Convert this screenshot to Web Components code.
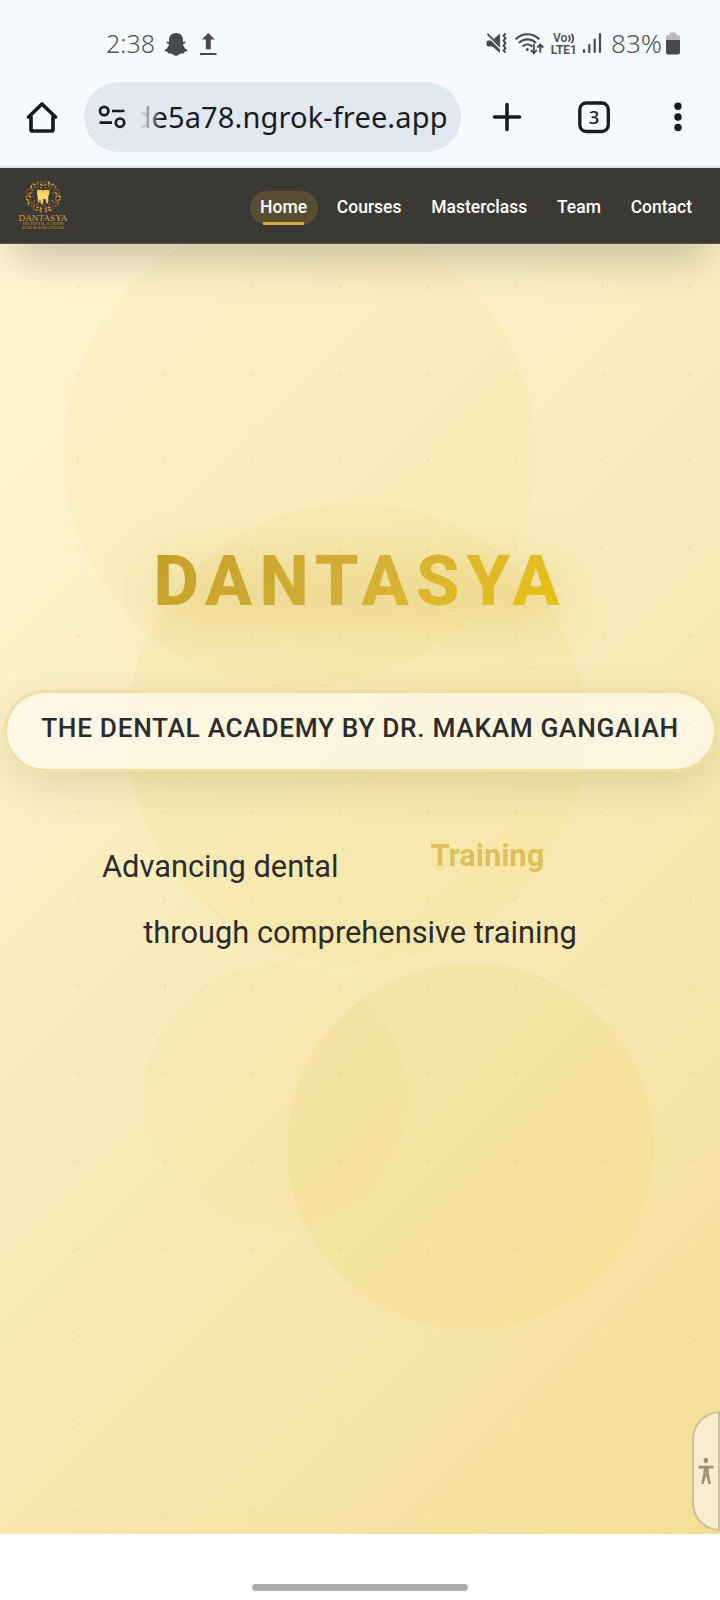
<!DOCTYPE html>
<html lang="en">
<head>
<meta charset="utf-8">
<title>Dantasya</title>
<style>
html,body{margin:0;padding:0;background:#fff}
body{font-family:Roboto,"Liberation Sans",sans-serif;width:720px;height:1600px;overflow:hidden}
</style>
</head>
<body>
<phone-screen>
  <status-bar></status-bar>
  <browser-bar></browser-bar>
  <site-nav>
    <nav-link active>Home</nav-link>
    <nav-link>Courses</nav-link>
    <nav-link>Masterclass</nav-link>
    <nav-link>Team</nav-link>
    <nav-link>Contact</nav-link>
  </site-nav>
  <hero-section>
    <hero-title>DANTASYA</hero-title>
    <hero-badge>THE DENTAL ACADEMY BY DR. MAKAM GANGAIAH</hero-badge>
    <hero-tagline>
      <span slot="lead">Advancing dental</span>
      <span slot="word">Training</span>
      <span slot="rest">through comprehensive training</span>
    </hero-tagline>
  </hero-section>
  <gesture-bar></gesture-bar>
</phone-screen>
<script>
const define=(name,html)=>customElements.define(name,class extends HTMLElement{
  constructor(){
    super();
    const t=document.createElement('template');
    t.innerHTML=html;
    this.attachShadow({mode:'open'}).append(t.content.cloneNode(true));
  }
});

define('phone-screen',`<style>
:host{display:flex;flex-direction:column;width:720px;height:1600px;background:#fff;overflow:hidden}
</style><slot></slot>`);

define('status-bar',`<style>
:host{display:flex;justify-content:space-between;height:82px;background:#f5faff;flex:none}
svg{display:block;flex:none}
text{font-family:"Noto Sans","Open Sans",sans-serif;fill:#535355}
</style>
<svg width="240" height="82" viewBox="0 0 240 82">
  <text x="106" y="52.500" font-size="25.500" font-weight="350" textLength="49" lengthAdjust="spacingAndGlyphs">2:38</text>
  <path fill="#49494b" d="M176 33c-4.500 0-7 3-7 7v2l-2-.5c-.8.200-.700 1.200.2 1.700l1.800 1c-.5 3-2.200 4.700-4 5.500-.8.500-.5 1.500 2.700 2.200.5 1 .3 1.500 1.300 1.500 1.500 0 2.700-.2 4 1 1 .9 2 1.400 3 1.400s2-.5 3-1.400c1.300-1.200 2.500-1 4-1 1 0 .8-.5 1.300-1.500 3.200-.7 3.500-1.700 2.700-2.200-1.800-.8-3.500-2.500-4-5.500l1.800-1c.9-.5 1-1.500.2-1.700l-2 .5v-2c0-4-2.500-7-7-7z"/>
  <path fill="#49494b" d="M208.300 33l6.500 6.500h-4v9.800h-5v-9.800h-4zM200 53h16.500v2H200z"/>
</svg>
<svg width="250" height="82" viewBox="470 0 250 82">
  <path fill="#49494b" d="M488 40.500h3l9 9V53l-7.500-6.500H489c-2 0-2.500-.8-2.500-2.500v-1.500c0-1.200.5-2 1.500-2zM500 33.500v11.800l-6.300-6.300z"/>
  <path fill="none" stroke="#49494b" stroke-width="1.900" d="M487.500 33.800l12.500 12.800M505.500 33.500l-2 2.200 2 2.500-2 2.500 2 2.500-2 2.500 2 2.500-2 2.500 2 2"/>
  <g fill="none" stroke="#49494b" stroke-width="2.100">
    <path d="M515.700 39.200c6.500-6.700 17-6.700 23.500 0M519 43c4.700-4.800 12.200-4.800 17 0M522.700 46.500c2.800-2.700 6.800-2.700 9.500 0"/>
    <path stroke-width="1.900" d="M533.800 43.800v9M530.800 50.200l3 3 3-3M540.300 52.800v-8M537.300 47.500l3-3 3 3"/>
  </g>
  <circle cx="527.300" cy="49.600" r="1.500" fill="#49494b"/>
  <text x="553" y="41.800" font-size="12" font-weight="600" textLength="14.500" lengthAdjust="spacingAndGlyphs" style="font-family:Roboto">Vo</text>
  <path fill="none" stroke="#49494b" stroke-width="1.700" d="M568.700 35.200q2.300 3.300 0 6.600M571.500 33.700q3.500 4.800 0 9.600"/>
  <text x="550.800" y="54" font-size="12.500" font-weight="700" textLength="26" lengthAdjust="spacingAndGlyphs" style="font-family:Roboto">LTE1</text>
  <path stroke="#49494b" stroke-width="2.200" stroke-linecap="round" d="M584 50v2M589.300 45v7M594.700 39.500v12.500M600 34v18"/>
  <text x="611" y="52.500" font-size="25.500" font-weight="350" textLength="51" lengthAdjust="spacingAndGlyphs">83%</text>
  <path fill="#b9babf" d="M669.500 34q0-1.500 1.500-1.500h4q1.500 0 1.500 1.500v1h1.500q2 0 2 2v4h-14v-4q0-2 2-2h1.500z"/>
  <path fill="#49494b" d="M666 40h14v12.500q0 2-2 2h-10q-2 0-2-2z"/>
</svg>`);

define('browser-bar',`<style>
:host{display:flex;align-items:flex-start;height:84px;background:#f5faff;border-bottom:2px solid #dde4ea;flex:none}
svg{display:block;flex:none}
.pill{width:377px;height:70px;border-radius:35px;background:#e2e8f1;flex:none}
text{font-family:"Noto Sans",sans-serif;fill:#181b20}
</style>
<svg width="84" height="70" viewBox="0 82 84 70"><path fill="none" stroke="#181b20" stroke-width="3.700" stroke-linejoin="round" d="M28.500 117H31v12.500q0 1.500 1.500 1.500h19q1.500 0 1.500-1.500V117h2.500L42 104z"/></svg>
<div class="pill"><svg width="377" height="70" viewBox="84 82 377 70">
  <defs><linearGradient id="fade" gradientUnits="userSpaceOnUse" x1="140" x2="162" y1="0" y2="0"><stop offset="0" stop-color="#181b20" stop-opacity="0"/><stop offset=".5" stop-color="#181b20" stop-opacity=".5"/><stop offset="1" stop-color="#181b20"/></linearGradient></defs>
  <g fill="none" stroke="#181b20" stroke-width="2.700"><circle cx="104.200" cy="111" r="4.200"/><circle cx="120" cy="122.700" r="4.200"/><path d="M112 111h12.500M99.500 122.700H112"/></g>
  <text x="133.500" y="127.500" font-size="29" font-weight="380" textLength="314" style="fill:url(#fade)">de5a78.ngrok-free.app</text>
</svg></div>
<svg width="259" height="70" viewBox="461 82 259 70">
  <g fill="none" stroke="#181b20" stroke-width="3.600" stroke-linecap="round"><path d="M507 104.500v25M494.500 117h25"/><rect x="579.800" y="103" width="28.500" height="28.500" rx="6.500" stroke-width="3.300"/></g>
  <text x="594" y="123.700" font-size="18.500" font-weight="500" text-anchor="middle">3</text>
  <g fill="#181b20"><circle cx="678" cy="106.300" r="3.700"/><circle cx="678" cy="117" r="3.700"/><circle cx="678" cy="127.500" r="3.700"/></g>
</svg>`);

// Laurel leaves: three rings of small tilted ellipses, left open at the bottom.
const tones=['#c08a2c','#7d5c2a','#d6a13c','#96702c','#6a5431'];
let leaves='';
[[16.3,26,1.9,.9],[13.3,22,1.7,.8],[10.3,14,.9,.6]].forEach(([r,n,rx,ry],k)=>{
  for(let i=0;i<n;i++){
    const a=100+i*340/(n-1),t=a*Math.PI/180;
    const x=(43.3+r*Math.cos(t)).toFixed(2),y=(195.7+r*.9*Math.sin(t)).toFixed(2);
    leaves+=`<ellipse cx="${x}" cy="${y}" rx="${rx}" ry="${ry}" fill="${tones[(i*3+k*2)%5]}" transform="rotate(${(a+(i%2?50:130)).toFixed(0)} ${x} ${y})"/>`;
  }
});

define('brand-logo',`<style>
:host{display:block;flex:none}svg{display:block}
text{font-family:"Liberation Serif",serif;fill:#d9a443;text-anchor:middle}
</style>
<svg width="52" height="52" viewBox="17 179 52 52">
  <defs><linearGradient id="g" x2="0" y2="1"><stop stop-color="#f2bd45"/><stop offset=".5" stop-color="#ffe37d"/><stop offset="1" stop-color="#e7a72f"/></linearGradient></defs>
  ${leaves}
  <path fill="url(#g)" d="M37 190q0-1.500 2-1.300l4.300.5 4.200-.5q2-.2 2 1.800 0 3-1.200 5v6q-.5 2-1.700 1-.8-1.500-1-4.500h-2.200v4.700q-1.600 1.500-2.700-.2-.4-3.500-.9-4.500l-.4 3.500q-1.400.5-1.700-.7V195.500q-1-2-.7-5.500z"/>
  <text x="43" y="220" font-size="9" textLength="49" lengthAdjust="spacingAndGlyphs">DANTASYA</text>
  <text x="43.200" y="224.400" font-size="4" font-weight="700" textLength="42" lengthAdjust="spacingAndGlyphs" style="fill:#b07f2d">THE DENTAL ACADEMY</text>
  <text x="43.200" y="228.300" font-size="3" font-weight="700" textLength="42" lengthAdjust="spacingAndGlyphs" style="fill:#b07f2d">BY DR. MAKAM GANGAIAH</text>
</svg>`);

define('site-nav',`<style>
:host{display:flex;justify-content:space-between;align-items:center;box-sizing:border-box;height:76px;padding:0 17.500px 0 17px;background:#3b3933;border-bottom:1px solid #55504a;flex:none;position:relative;z-index:2;box-shadow:0 27px 42px -13px rgba(0,0,0,.21)}
nav{display:flex;gap:8.750px;align-items:center;padding-top:4px}
</style><brand-logo></brand-logo><nav><slot></slot></nav>`);

define('nav-link',`<style>
:host{display:flex;box-sizing:border-box;height:34px;padding:0 10.500px;align-items:center;border-radius:17.500px;color:#fff;font-size:17.500px;font-weight:500;line-height:20px;position:relative}
:host([active]){background:#584e33}
:host([active])::after{content:"";position:absolute;left:13.500px;right:13.500px;bottom:0;height:3px;background:#d4af37}
span{position:relative;top:-1px}
</style><span><slot></slot></span>`);

define('hero-backdrop',`<style>
:host{position:absolute;inset:0}svg{display:block}
</style>
<svg width="720" height="1290" viewBox="0 244 720 1290">
  <defs><pattern id="dots" patternUnits="userSpaceOnUse" x="34" y="242.600" width="87.500" height="87.500"><circle cx="43.750" cy="43.750" r="1.900" fill="#d4af37" fill-opacity=".125"/></pattern>
  <linearGradient id="c" x1="0" y1="0" x2="1" y2="1"><stop stop-color="#d8b43a"/><stop offset="1" stop-color="#f4d834"/></linearGradient></defs>
  <circle cx="299.500" cy="451.500" r="236.500" fill="url(#c)" fill-opacity=".06"/>
  <circle cx="470.300" cy="1146.200" r="183.500" fill="url(#c)" fill-opacity=".1"/>
  <circle cx="275.800" cy="1096.300" r="131.700" fill="url(#c)" fill-opacity=".045"/>
  <circle cx="356.500" cy="733" r="230" fill="url(#c)" fill-opacity=".08"/>
  <rect y="244" width="720" height="1290" fill="url(#dots)"/>
</svg>`);

define('access-tab',`<style>
:host{display:flex;align-items:center;justify-content:center;box-sizing:border-box;position:absolute;right:0;bottom:3px;width:28px;height:120px;border:2px solid #cdc297;border-radius:28px 0 0 28px;background:#f7eed0}
svg{display:block;margin-right:1px}
</style>
<svg width="16" height="28" viewBox="0 0 16 28" fill="#9c9370"><ellipse cx="7.800" cy="3.500" rx="2.200" ry="2.700"/><path d="M.5 8.700h15v2.800h-4.800v4l2.300 11.500h-2.500L8 18.500 5.700 27H3.200l2.300-11.500v-4h-5z"/></svg>`);

define('hero-section',`<style>
:host{display:flex;flex-direction:column;align-items:center;box-sizing:border-box;height:1290px;padding-top:295px;position:relative;flex:none;overflow:hidden;background:linear-gradient(135deg,#fff5d2 0%,#f8eab8 50%,#f4df98 100%)}
</style><hero-backdrop></hero-backdrop><slot></slot><access-tab></access-tab>`);

define('hero-title',`<style>
:host{display:block;position:relative;height:84px;line-height:84px;font-size:70px;font-weight:800;letter-spacing:7px;white-space:nowrap}
span{position:relative;background:linear-gradient(135deg,#c49f28 0%,#d4af37 50%,#eac513 100%);-webkit-background-clip:text;background-clip:text;color:transparent;display:block}
:host::before{content:"";position:absolute;left:-5px;right:0;top:22px;bottom:-3px;background:rgba(212,175,55,.25);filter:blur(24px);border-radius:40px}
</style><span><slot></slot></span>`);

define('hero-badge',`<style>
:host{display:flex;align-items:center;justify-content:center;box-sizing:border-box;position:relative;width:713px;height:82px;margin-top:67px;border:3px solid rgba(239,219,158,.8);border-radius:44px;background:rgba(255,255,255,.58);background-clip:padding-box;box-shadow:0 14px 42px rgba(70,60,10,.13);font-size:26.250px;font-weight:500;letter-spacing:.670px;color:#2c2c2c;white-space:nowrap}
span{position:relative;top:-3px}
</style><span><slot></slot></span>`);

define('hero-tagline',`<style>
:host{display:flex;flex-direction:column;position:relative;width:720px;margin-top:62px;font-size:30.800px;line-height:66px;color:#2c2c2c;white-space:nowrap}
.row{display:flex;justify-content:center;height:66px}
.row.first{justify-content:flex-start;padding-left:102px}
.word{margin-left:92px;margin-top:-11px;font-weight:700;color:#d4af37;opacity:.7}
</style><div class="row first"><slot name="lead"></slot><div class="word"><slot name="word"></slot></div></div><div class="row"><slot name="rest"></slot></div>`);

define('gesture-bar',`<style>
:host{display:flex;justify-content:center;align-items:flex-start;box-sizing:border-box;height:66px;padding-top:50px;background:#fff;flex:none}
i{width:216px;height:7px;border-radius:4px;background:#adadad}
</style><i></i>`);
</script>
</body>
</html>
